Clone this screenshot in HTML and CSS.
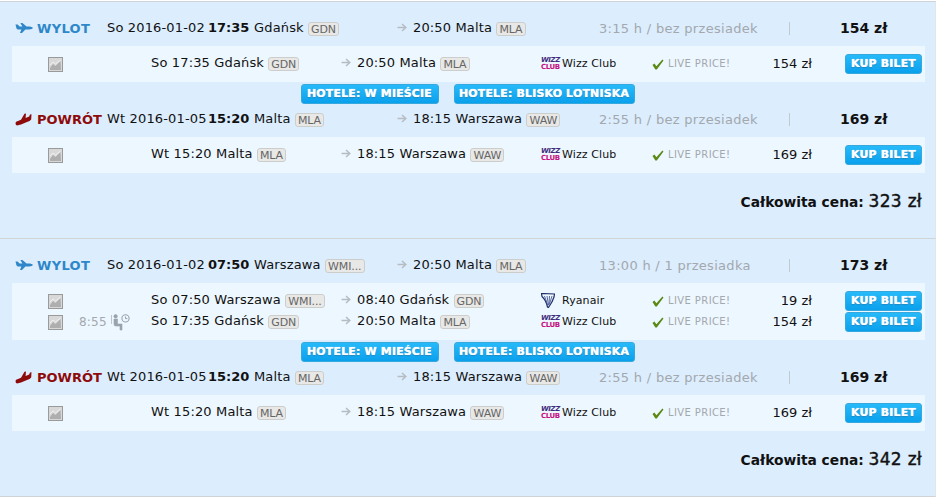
FILE: index.html
```html
<!DOCTYPE html>
<html lang="pl">
<head>
<meta charset="utf-8">
<title>Loty</title>
<link rel="stylesheet" href="styles.css">
</head>
<body>
<svg class="defs" width="0" height="0" aria-hidden="true">
  <defs>
    <symbol id="plane-out" viewBox="0 0 18 11"><path d="M0.5 2 L2.6 2 L4.6 4 L7.4 4 L5.4 0.4 L7.4 0.4 L11.6 4 L15 4 Q18 4.6 18 5.6 Q17.5 7 14 7 L10.4 7 L7 10.6 L5 10.6 L6.4 7 L3 7 Q1.6 6.8 1.4 5.4 Z" fill="#2d87c9"/></symbol>
    <symbol id="plane-in" viewBox="0 0 17 13"><path d="M0.5 10 Q0.5 8.5 3 8 L6 6.8 L9.5 0.8 L11 0.5 L10.6 5 L14.2 3.4 L15 1.4 L16.5 1.2 L16.2 6.6 Q15 8.6 12 9 L6 11.4 L2 12.4 Q0.5 12.4 0.5 10 Z" fill="#8e0b0b"/></symbol>
    <symbol id="thumb" viewBox="0 0 15 15"><rect x="0.5" y="0.5" width="14" height="14" fill="#d8d8d8" stroke="#9a9a9a"/><path d="M2 11 L5 7 L7.5 9 L12.5 4 L13 13 L2 13 Z" fill="#aeaeae"/><path d="M2 8 L5 5 L7.5 7 L12.5 3" fill="none" stroke="#f0f0f0"/></symbol>
    <symbol id="arrow" viewBox="0 0 10 9"><path d="M0.5 4.5 H8 M5 1 L8.8 4.5 L5 8" fill="none" stroke="#b5bcc2" stroke-width="1.5"/></symbol>
    <symbol id="check" viewBox="0 0 12 11"><path d="M0.5 6 L2.4 4.6 L4.4 7.2 L10.4 0.6 L11.5 1.4 L4.8 10.6 L3.4 10.6 Z" fill="#5a8a14"/></symbol>
    <symbol id="harp" viewBox="0 0 14 15"><path d="M0.5 0.5 L13.5 1 L13 4 Q11.5 9 7.5 14.5 L6.5 14 Q5 7 1 3.5 Z" fill="none" stroke="#1f2f6e" stroke-width="1.2"/><path d="M3.5 3 L7 13 M6 3 L7.5 12 M8.5 3 L8 12 M11 3 L8.5 11" stroke="#4a5a92" stroke-width="0.9" fill="none"/></symbol>
    <symbol id="wait" viewBox="0 0 19 17"><circle cx="4.6" cy="2.2" r="2" fill="#9aa3ab"/><path d="M0.5 1 V10 M3 5 H6.5 V10 H11 V16 H9 V12 H4.6 Q3 12 3 10 Z" fill="#9aa3ab" stroke="#9aa3ab" stroke-width="0.6"/><circle cx="14.5" cy="4.4" r="3.6" fill="none" stroke="#9aa3ab" stroke-width="1.1"/><path d="M14.5 2.4 V4.6 H16.4" fill="none" stroke="#9aa3ab"/></symbol>
  </defs>
</svg>

<main class="page">
  <article class="offer">
    <section class="leg-head">
      <svg class="dir-icon out"><use href="#plane-out"/></svg>
      <span class="label wylot">WYLOT</span>
      <span class="cell"><span class="date">So 2016-01-02</span><b class="time">17:35</b>Gdańsk <span class="code">GDN</span></span>
      <span class="cell"><svg class="arrow"><use href="#arrow"/></svg>20:50 Malta <span class="code">MLA</span></span>
      <span class="duration">3:15 h / bez przesiadek</span>
      <span class="divider"></span>
      <span class="price">154 zł</span>
    </section>
    <section class="segments">
      <div class="seg">
        <svg class="thumb"><use href="#thumb"/></svg><span class="stop"></span>
        <span class="cell">So 17:35 Gdańsk <span class="code">GDN</span></span>
        <span class="cell"><svg class="arrow"><use href="#arrow"/></svg>20:50 Malta <span class="code">MLA</span></span>
        <span class="airline"><span class="wizz"><i>WIZZ</i><i class="club">CLUB</i></span>Wizz Club</span>
        <span class="live"><svg class="check"><use href="#check"/></svg>LIVE PRICE!</span>
        <span class="seg-price">154 zł</span>
        <a class="btn buy">KUP BILET</a>
      </div>
    </section>
    <div class="hotels"><a class="btn hotel">HOTELE: W MIEŚCIE</a><a class="btn hotel">HOTELE: BLISKO LOTNISKA</a></div>
    <section class="leg-head back">
      <svg class="dir-icon in"><use href="#plane-in"/></svg>
      <span class="label powrot">POWRÓT</span>
      <span class="cell"><span class="date">Wt 2016-01-05</span><b class="time">15:20</b>Malta <span class="code">MLA</span></span>
      <span class="cell"><svg class="arrow"><use href="#arrow"/></svg>18:15 Warszawa <span class="code">WAW</span></span>
      <span class="duration">2:55 h / bez przesiadek</span>
      <span class="divider"></span>
      <span class="price">169 zł</span>
    </section>
    <section class="segments">
      <div class="seg">
        <svg class="thumb"><use href="#thumb"/></svg><span class="stop"></span>
        <span class="cell">Wt 15:20 Malta <span class="code">MLA</span></span>
        <span class="cell"><svg class="arrow"><use href="#arrow"/></svg>18:15 Warszawa <span class="code">WAW</span></span>
        <span class="airline"><span class="wizz"><i>WIZZ</i><i class="club">CLUB</i></span>Wizz Club</span>
        <span class="live"><svg class="check"><use href="#check"/></svg>LIVE PRICE!</span>
        <span class="seg-price">169 zł</span>
        <a class="btn buy">KUP BILET</a>
      </div>
    </section>
    <p class="total">Całkowita cena: <span class="sum">323 zł</span></p>
  </article>

  <article class="offer second">
    <section class="leg-head">
      <svg class="dir-icon out"><use href="#plane-out"/></svg>
      <span class="label wylot">WYLOT</span>
      <span class="cell"><span class="date">So 2016-01-02</span><b class="time">07:50</b>Warszawa <span class="code">WMI...</span></span>
      <span class="cell"><svg class="arrow"><use href="#arrow"/></svg>20:50 Malta <span class="code">MLA</span></span>
      <span class="duration">13:00 h / 1 przesiadka</span>
      <span class="divider"></span>
      <span class="price">173 zł</span>
    </section>
    <section class="segments">
      <div class="seg">
        <svg class="thumb"><use href="#thumb"/></svg><span class="stop"></span>
        <span class="cell">So 07:50 Warszawa <span class="code">WMI...</span></span>
        <span class="cell"><svg class="arrow"><use href="#arrow"/></svg>08:40 Gdańsk <span class="code">GDN</span></span>
        <span class="airline"><svg class="harp"><use href="#harp"/></svg>Ryanair</span>
        <span class="live"><svg class="check"><use href="#check"/></svg>LIVE PRICE!</span>
        <span class="seg-price">19 zł</span>
        <a class="btn buy">KUP BILET</a>
      </div>
      <div class="seg">
        <svg class="thumb"><use href="#thumb"/></svg><span class="stop">8:55<svg class="wait"><use href="#wait"/></svg></span>
        <span class="cell">So 17:35 Gdańsk <span class="code">GDN</span></span>
        <span class="cell"><svg class="arrow"><use href="#arrow"/></svg>20:50 Malta <span class="code">MLA</span></span>
        <span class="airline"><span class="wizz"><i>WIZZ</i><i class="club">CLUB</i></span>Wizz Club</span>
        <span class="live"><svg class="check"><use href="#check"/></svg>LIVE PRICE!</span>
        <span class="seg-price">154 zł</span>
        <a class="btn buy">KUP BILET</a>
      </div>
    </section>
    <div class="hotels"><a class="btn hotel">HOTELE: W MIEŚCIE</a><a class="btn hotel">HOTELE: BLISKO LOTNISKA</a></div>
    <section class="leg-head back">
      <svg class="dir-icon in"><use href="#plane-in"/></svg>
      <span class="label powrot">POWRÓT</span>
      <span class="cell"><span class="date">Wt 2016-01-05</span><b class="time">15:20</b>Malta <span class="code">MLA</span></span>
      <span class="cell"><svg class="arrow"><use href="#arrow"/></svg>18:15 Warszawa <span class="code">WAW</span></span>
      <span class="duration">2:55 h / bez przesiadek</span>
      <span class="divider"></span>
      <span class="price">169 zł</span>
    </section>
    <section class="segments">
      <div class="seg">
        <svg class="thumb"><use href="#thumb"/></svg><span class="stop"></span>
        <span class="cell">Wt 15:20 Malta <span class="code">MLA</span></span>
        <span class="cell"><svg class="arrow"><use href="#arrow"/></svg>18:15 Warszawa <span class="code">WAW</span></span>
        <span class="airline"><span class="wizz"><i>WIZZ</i><i class="club">CLUB</i></span>Wizz Club</span>
        <span class="live"><svg class="check"><use href="#check"/></svg>LIVE PRICE!</span>
        <span class="seg-price">169 zł</span>
        <a class="btn buy">KUP BILET</a>
      </div>
    </section>
    <p class="total">Całkowita cena: <span class="sum">342 zł</span></p>
  </article>
</main>
</body>
</html>
```
FILE: styles.css
```css
* { box-sizing: border-box; }
html, body { margin: 0; padding: 0; background: #fff; }
body {
  font-family: "DejaVu Sans", Verdana, sans-serif;
  font-size: 13px;
  letter-spacing: 0.15px;
  color: #111;
  overflow: hidden;
}
.defs { position: absolute; }
.page { width: 936px; padding-top: 1px; }
.offer {
  background: #dcedfe;
  border-top: 1px solid #cfd3d6;
  border-right: 1px solid #e2e6ea;
  height: 237px;
}
.offer.second {
  height: 259px;
  border-bottom: 1px solid #cfd3d6;
}
.leg-head {
  display: grid;
  grid-template-columns: 22px 70px 290px 202px 190px 51px 1fr;
  align-items: center;
  height: 26px;
  margin: 13px 0 5px;
  padding-left: 15px;
  white-space: nowrap;
}
.leg-head.back { margin-top: 2px; }
.dir-icon { width: 18px; height: 12px; display: block; }
.dir-icon.in { width: 17px; height: 13px; }
.label { font-weight: 700; letter-spacing: 0; }
.wylot { color: #2d87c9; letter-spacing: 0.35px; }
.powrot { color: #8e0b0b; }
.date { display: inline-block; width: 101px; }
.time { display: inline-block; width: 46px; font-weight: 700; letter-spacing: 0; }
.code {
  display: inline-block;
  padding: 0 2px;
  height: 14px;
  line-height: 13px;
  font-size: 11px;
  letter-spacing: -0.1px;
  color: #666;
  background: #e8e8e6;
  border: 1px solid #cdcdcb;
  border-radius: 3px;
  vertical-align: -1px;
}
.arrow { width: 10px; height: 9px; margin-right: 6px; }
.cell { display: block; white-space: nowrap; }
.duration { color: #a3a8ad; letter-spacing: 0.3px; }
.divider { display: block; width: 1px; height: 13px; background: #c4c9cd; }
.price { font-weight: 700; font-size: 14px; letter-spacing: 0; }
.segments {
  background: #edf7ff;
  margin: 0 10px 0 12px;
  padding: 8px 3px 8px 36px;
  display: flex;
  flex-direction: column;
  gap: 1px;
}
.seg {
  display: grid;
  grid-template-columns: 31px 72px 190px 200px 111px 111px 49px 33px 77px;
  align-items: center;
  height: 20px;
  white-space: nowrap;
}
.seg .buy { grid-column: 9; }
.seg .cell, .seg-price { margin-bottom: 2px; }
.seg-price { grid-column: 7; text-align: right; letter-spacing: 0; }
.thumb { width: 15px; height: 15px; display: block; }
.stop { color: #a3a8ad; display: flex; align-items: center; font-size: 12px; letter-spacing: 0.2px; }
.wait { width: 19px; height: 17px; margin-left: 4px; }
.airline { display: flex; align-items: center; font-size: 11px; letter-spacing: 0.1px; margin-bottom: 1px; }
.wizz { display: flex; flex-direction: column; width: 21px; font-size: 7px; line-height: 7px; font-weight: 700; letter-spacing: -0.4px; }
.wizz i { font-style: italic; color: #3d2c7a; }
.wizz i.club { font-style: normal; color: #c6107e; }
.harp { width: 14px; height: 15px; margin-right: 7px; }
.live { display: flex; align-items: center; font-size: 10px; letter-spacing: 0.4px; color: #a3a8ad; margin-bottom: 2px; }
.check { width: 12px; height: 11px; margin: 2px 4px 0 0; }
.btn {
  display: block;
  height: 20px;
  line-height: 18px;
  text-align: center;
  font-weight: 700;
  font-size: 11px;
  letter-spacing: 0.15px;
  color: #fff;
  background: linear-gradient(#27bafa, #0aa0ec);
  border: 1px solid #35a8dd;
  border-radius: 3px;
  text-shadow: 0 0 1px #fff, 0 1px 1px rgba(0, 80, 130, 0.5);
}
.hotels {
  display: flex;
  justify-content: center;
  gap: 15px;
  margin-top: 2px;
}
.hotels .hotel:first-child { width: 138px; }
.hotels .hotel:last-child { width: 181px; }
.total {
  margin: 18px 13px 0 0;
  text-align: right;
  font-weight: 700;
  font-size: 13.8px;
  letter-spacing: 0;
  height: 20px;
  line-height: 20px;
}
.sum { font-size: 17px; letter-spacing: 0.3px; font-weight: 400; -webkit-text-stroke: 0.4px #111; }
```
